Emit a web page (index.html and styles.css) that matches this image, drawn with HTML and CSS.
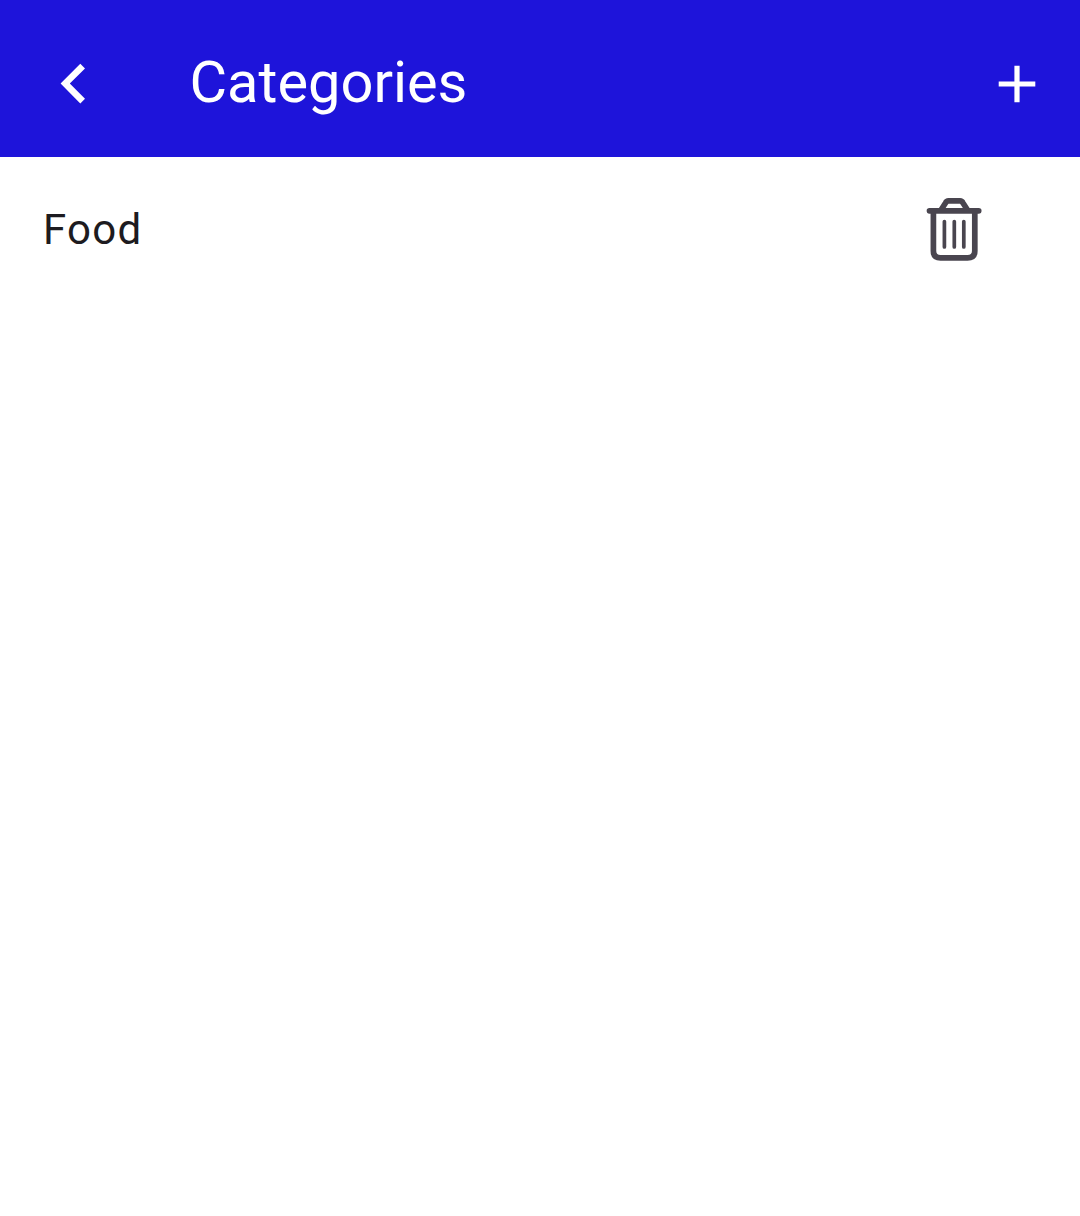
FILE: index.html
```html
<!DOCTYPE html>
<html lang="en">
<head>
<meta charset="utf-8">
<title>Categories</title>
<link rel="stylesheet" href="styles.css">
</head>
<body>
<header class="app-bar">
  <button class="icon-button back" aria-label="Back">
    <svg width="66" height="66" viewBox="0 0 66 66"><path fill="currentColor" d="M40.300 12.800 45 17.500 29.800 32.600 45 47.700 40.300 52.400 20.600 32.600z"/></svg>
  </button>
  <h1 class="title">Categories</h1>
  <button class="icon-button add" aria-label="Add category">
    <svg width="62" height="62" viewBox="0 0 62 62"><path fill="currentColor" d="M49.300 33.600H33.600V49.300H28.400V33.600H12.700V28.400H28.400V12.700H33.600V28.400H49.300z"/></svg>
  </button>
</header>
<main class="list">
  <div class="row">
    <span class="name">Food</span>
    <button class="icon-button delete" aria-label="Delete Food">
      <svg width="56" height="64" viewBox="0 0 56 64" fill="none" stroke="currentColor" stroke-linecap="round" stroke-linejoin="round">
        <path stroke-width="5.700" d="M3.500 12.800H52.700M15 12 19.500 5Q20.500 2.900 22.500 2.900H34Q36 2.900 37 5L41.500 12M7.400 14V53Q7.400 59.900 14.500 59.900H41.500Q48.800 59.900 48.800 53V14"/>
        <path stroke-width="3.700" d="M18.400 23.500V49M28.300 23.500V49M37.800 23.500V49"/>
      </svg>
    </button>
  </div>
</main>
</body>
</html>
```
FILE: styles.css
```css
body {
  margin: 0;
  min-height: 1216px;
  background: #fff;
  font-family: Roboto, sans-serif;
}
.app-bar {
  box-sizing: border-box;
  height: 157px;
  display: flex;
  align-items: center;
  padding: 10px 32px 0 40px;
  background: #1e14da;
  color: #fff;
}
.icon-button {
  display: flex;
  padding: 0;
  border: 0;
  background: none;
  color: inherit;
}
.title {
  flex: 1;
  margin: 0 0 4px 83.5px;
  font-size: 57.75px;
  font-weight: 400;
  line-height: 70px;
}
.row {
  box-sizing: border-box;
  height: 145px;
  display: flex;
  align-items: center;
  justify-content: space-between;
  padding: 0 98px 0 43px;
}
.name {
  font-size: 42px;
  line-height: 50px;
  letter-spacing: 1.3px;
  color: #1d1b20;
}
.delete {
  color: #49454f;
}
```
